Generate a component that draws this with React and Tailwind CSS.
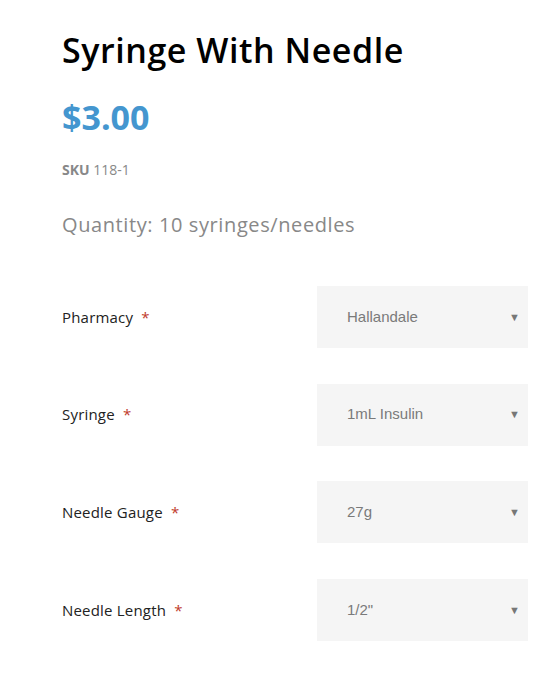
const rows = [
    { label: 'Pharmacy', value: 'Hallandale' },
    { label: 'Syringe', value: '1mL Insulin' },
    { label: 'Needle Gauge', value: '27g' },
    { label: 'Needle Length', value: '1/2"' },
];

const SelectRow = ({ label, value }) => (
    <div className="flex items-center justify-between">
        <label className="text-[15px] text-[#222] tracking-[0.2px]">
            {label} <span className="text-[#c0392b] ml-1">*</span>
        </label>
        <div className="w-[211px] h-[62px] bg-[#f5f5f5] flex items-center justify-between pl-[30px] pr-[8px] font-['Liberation_Sans',Arial,sans-serif] text-[15px] text-[#7a7a7a]">
            <span>{value}</span>
            <span className="text-[11px] text-[#777]">▼</span>
        </div>
    </div>
);

const App = () => {
    return (
        <div className="w-[550px] min-h-[673px] bg-white font-['Open_Sans',sans-serif]">
            <div className="pl-[62px] pr-[22px] pt-[28px]">
                <h1 className="text-[34px] leading-[44px] font-semibold text-black tracking-[0.55px]">
                    Syringe With Needle
                </h1>
                <div className="mt-[23px] text-[34px] leading-[44px] font-bold text-[#4496cf]">
                    $3.00
                </div>
                <div className="mt-[20px] text-[14px] text-[#888]">
                    <span className="font-bold">SKU</span> 118-1
                </div>
                <div className="mt-[30px] text-[20px] text-[#888] tracking-[0.6px]">
                    Quantity: 10 syringes/needles
                </div>
                <div className="mt-[46px] flex flex-col gap-[35.6px]">
                    {rows.map((r) => (
                        <SelectRow key={r.label} {...r} />
                    ))}
                </div>
            </div>
        </div>
    );
};

export default App;
